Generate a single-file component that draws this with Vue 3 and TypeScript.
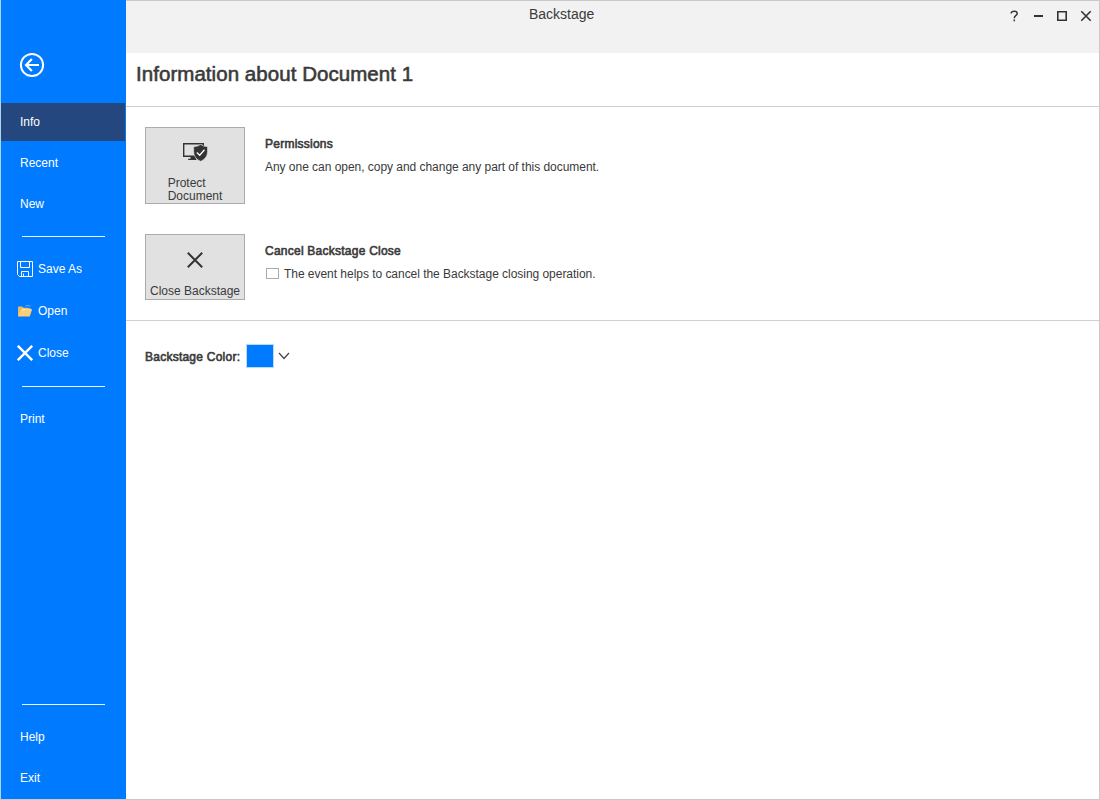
<script setup lang="ts">
import { ref } from 'vue'

const active = ref('Info')
const cancelClose = ref(false)
const topItems = ['Info', 'Recent', 'New']
const bottomItems = ['Help', 'Exit']
</script>

<template>
  <div class="window">
    <nav class="sidebar">
      <button class="back" aria-label="Back">
        <svg width="26" height="26" viewBox="0 0 26 26" fill="none" stroke="#fff" stroke-width="2">
          <circle cx="13" cy="13" r="11.1" />
          <path d="M20 13H7M12.9 7L7 13l5.9 6" stroke-width="2.2" />
        </svg>
      </button>
      <div
        v-for="item in topItems"
        :key="item"
        class="tab"
        :class="{ active: item === active }"
        @click="active = item"
      ><span>{{ item }}</span></div>
      <hr class="rule first" />
      <div class="command">
        <svg width="16" height="16" viewBox="0 0 16 16" fill="none" stroke="#fff">
          <path d="M.5.5h15v15H2.5l-2-2zM3.5.5v6h9v-6M4.5 15.5v-5h7v5M6.5 12.5v3" />
        </svg>
        <span>Save As</span>
      </div>
      <div class="command">
        <svg width="16" height="16" viewBox="0 0 16 16">
          <path d="M1 4.3q0-.8.8-.8h3.6l1.2 1.3H11l2 1v7H1z" fill="#e9b95d" />
          <path d="M5 5.8h9v3H4z" fill="#fff0c1" />
          <path d="M1 13.5L3.5 7.2h4l1-1h6.7l-2.5 7.3z" fill="#f9ce78" />
          <path d="M8.5 3q2-1.4 4 .2l1-.8" fill="none" stroke="#6cb8f3" />
        </svg>
        <span>Open</span>
      </div>
      <div class="command">
        <svg width="16" height="16" viewBox="0 0 16 16" fill="none" stroke="#fff" stroke-width="2.4">
          <path d="M.8.8l14.4 14.4M15.2.8L.8 15.2" />
        </svg>
        <span>Close</span>
      </div>
      <hr class="rule second" />
      <div class="tab"><span>Print</span></div>
      <div class="grow"></div>
      <hr class="rule third" />
      <div v-for="item in bottomItems" :key="item" class="tab"><span>{{ item }}</span></div>
    </nav>

    <main>
      <header>
        <span class="title">Backstage</span>
        <div class="controls">
          <svg width="84" height="16" viewBox="0 0 84 16" fill="none" stroke="#333">
            <path d="M1.2 5.6V5Q1.3 3.2 4.3 3.2 7.2 3.2 7.2 5.4 7.2 6.6 5.7 7.6 4.3 8.6 4.3 10.2M4.3 11.6v1.6" stroke-width="1.5" />
            <path d="M24 8h9" stroke-width="2" />
            <path d="M47.8 3.8h8.4v8.4h-8.4z" stroke-width="1.6" />
            <path d="M71.3 3.3l9.4 9.4M80.7 3.3l-9.4 9.4" stroke-width="1.6" />
          </svg>
        </div>
      </header>
      <div class="heading"><h1>Information about Document 1</h1></div>
      <section class="options">
        <div class="row protect">
          <button class="tile">
            <svg width="26" height="22" viewBox="0 0 26 22">
              <path d="M12 15.2H1.7V2.7h19.6V6" fill="none" stroke="#333" stroke-width="1.4" />
              <path d="M8.5 15h4.5l1.5 4H6.2v-1.3h2.3z" fill="#333" />
              <path d="M18.6 3.5q2.7 2.1 6.9 2.2v5q0 6.5-6.9 9.6-6.9-3.1-6.9-9.6v-5q4.2-.1 6.9-2.2z" fill="#333" stroke="#e1e1e1" stroke-width=".6" />
              <path d="M14.8 11.6l2.9 2.7 4.8-5.5" fill="none" stroke="#fff" stroke-width="1.3" />
            </svg>
            <span>Protect<br />Document</span>
          </button>
          <div class="info">
            <h2>Permissions</h2>
            <p class="detail">Any one can open, copy and change any part of this document.</p>
          </div>
        </div>
        <div class="row dismiss">
          <button class="tile">
            <svg width="16" height="16" viewBox="0 0 16 16" fill="none" stroke="#333" stroke-width="2">
              <path d="M.8.8l14.4 14.4M15.2.8L.8 15.2" />
            </svg>
            <span>Close Backstage</span>
          </button>
          <div class="info">
            <h2>Cancel Backstage Close</h2>
            <label class="check">
              <input v-model="cancelClose" type="checkbox" />
              <span>The event helps to cancel the Backstage closing operation.</span>
            </label>
          </div>
        </div>
      </section>
      <div class="color">
        <h2>Backstage Color:</h2>
        <span class="swatch"></span>
        <svg width="12" height="8" viewBox="0 0 12 8" fill="none" stroke="#444" stroke-width="1.2">
          <path d="M1 1l5 5.5L11 1" />
        </svg>
      </div>
    </main>
  </div>
</template>

<style>
body { margin: 0; }
</style>

<style scoped>
* { box-sizing: border-box; }
.window {
  display: flex;
  width: 1100px;
  height: 800px;
  border: 1px solid #c9c9c9;
  border-left-color: #acd8ee;
  background: #fff;
  color: #3a3a3a;
  font: 12px/14px "Liberation Sans", Arial, sans-serif;
  letter-spacing: -.035px;
}
button { padding: 0; border: 0; background: none; color: inherit; font: inherit; letter-spacing: inherit; }
h1, h2, p, hr { margin: 0; }
.sidebar {
  display: flex;
  flex-direction: column;
  width: 125px;
  margin-top: -1px;
  padding-top: 1px;
  background: #007aff;
  color: #fff;
  letter-spacing: 0;
}
.back { width: 26px; height: 26px; margin: 51px 0 25px 18px; flex: none; }
.back svg { display: block; }
.tab {
  display: flex;
  align-items: center;
  flex: none;
  height: 38px;
  margin-bottom: 3px;
  padding-left: 19px;
}
.tab.active { width: 124px; background: #24477f; }
.rule { flex: none; width: 83px; height: 1px; margin-left: 21px; border: 0; background: #e5f6ff; }
.first { margin-top: 10px; margin-bottom: 11px; }
.second { margin-top: 12px; margin-bottom: 13px; }
.third { margin-bottom: 13px; }
.command { display: flex; align-items: center; gap: 5px; height: 42px; padding-left: 16px; flex: none; }
.grow { flex: 1; }
.sidebar > .tab:last-child { margin-bottom: 2px; }
main { flex: 1; min-width: 0; }
header {
  position: relative;
  height: 52px;
  background: #f2f2f2;
  padding-left: 403px;
}
.title { display: inline-block; padding-top: 5px; font-size: 14px; line-height: 16px; letter-spacing: 0; }
.controls { position: absolute; top: 7px; left: 884px; }
.heading { height: 54px; padding: 9px 0 0 10px; border-bottom: 1px solid #cfcfcf; }
h1 { font-size: 20.5px; line-height: 24px; font-weight: 400; letter-spacing: .05px; -webkit-text-stroke: .6px #3a3a3a; }
.options { height: 214px; padding: 20px 0 0 19px; border-bottom: 1px solid #cfcfcf; }
.row { display: flex; gap: 20px; }
.dismiss { margin-top: 30px; }
.tile {
  display: flex;
  flex-direction: column;
  align-items: center;
  width: 100px;
  height: 77px;
  border: 1px solid #ababab;
  background: #e1e1e1;
  text-align: left;
  line-height: 13px;
}
.protect .tile { padding-top: 13px; }
.protect .tile span { margin-top: 14px; letter-spacing: 0; }
.dismiss .tile { height: 66px; padding-top: 17px; }
.dismiss .tile span { margin-top: 17px; letter-spacing: 0; white-space: nowrap; }
.info { padding-top: 10px; }
h2 { font-size: 12px; line-height: 15px; font-weight: 400; letter-spacing: .24px; -webkit-text-stroke: .6px #3a3a3a; }
.detail { margin-top: 8px; }
.check { display: flex; align-items: center; gap: 5px; height: 14px; margin-top: 7px; padding-left: 1px; }
.check input { appearance: none; width: 13px; height: 11px; margin: 0; border: 1px solid #ababab; background: #fff; }
.check input:checked { background: #007aff; }
.check span { position: relative; top: 1px; }
.color { display: flex; align-items: center; height: 24px; margin: 23px 0 0 19px; }
.color h2 { width: 95px; padding-top: 2px; white-space: nowrap; }
.swatch { width: 28px; height: 24px; margin: 0 4px 0 6px; border: 1px solid #b7dcff; background: #007aff; }
</style>
